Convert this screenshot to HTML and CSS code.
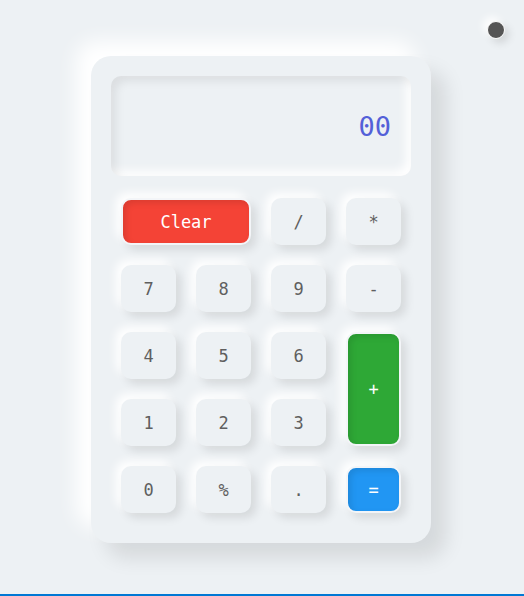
FILE: index.html
```html
<!DOCTYPE html>
<html>
<head>
<meta charset="utf-8">
<link rel="stylesheet" href="styles.css">
</head>
<body>
<div class="page">
  <button class="toggle" aria-label="theme"></button>
  <div class="calc">
    <div class="display">00</div>
    <div class="keys">
      <button class="key clear">Clear</button>
      <button class="key">/</button>
      <button class="key">*</button>
      <button class="key">7</button>
      <button class="key">8</button>
      <button class="key">9</button>
      <button class="key">-</button>
      <button class="key">4</button>
      <button class="key">5</button>
      <button class="key">6</button>
      <button class="key plus">+</button>
      <button class="key">1</button>
      <button class="key">2</button>
      <button class="key">3</button>
      <button class="key">0</button>
      <button class="key">%</button>
      <button class="key">.</button>
      <button class="key equals">=</button>
    </div>
  </div>
</div>
</body>
</html>
```
FILE: styles.css
```css
html, body {
  margin: 0;
  padding: 0;
  background: #edf1f4;
}
.page {
  position: relative;
  border-bottom: 2px solid #0078d4;
  padding: 56px 0 0 91px;
  height: 538px;
}
.toggle {
  position: absolute;
  left: 487px;
  top: 21px;
  width: 18px;
  height: 18px;
  border-radius: 50%;
  background: #555;
  border: 1px solid #fff;
  padding: 0;
  box-shadow: -4px -4px 8px #fff, 4px 4px 8px rgba(0,0,0,0.12);
}
.calc {
  width: 300px;
  padding: 20px;
  border-radius: 20px;
  background: #edf1f4;
  box-shadow: 15px 15px 20px rgba(0,0,0,0.1), -15px -15px 20px #fff;
}
.display {
  height: 100px;
  border-radius: 10px;
  box-shadow: inset 5px 5px 10px rgba(0,0,0,0.08), inset -5px -5px 10px #fff;
  display: flex;
  align-items: center;
  justify-content: flex-end;
  padding-right: 20px;
  font-family: "DejaVu Sans Mono", monospace;
  font-size: 27px;
  color: #5360d8;
}
.keys {
  margin-top: 22px;
  padding: 0 10px 10px;
  display: grid;
  grid-template-columns: repeat(4, 55px);
  grid-auto-rows: 47px;
  gap: 20px;
}
.key {
  border: none;
  border-radius: 10px;
  background: #edf1f4;
  box-shadow: 5px 5px 10px rgba(0,0,0,0.1), -5px -5px 10px #fff;
  font-family: "DejaVu Sans Mono", monospace;
  font-size: 17px;
  color: #5f5f5f;
  padding: 0;
}
.clear, .plus, .equals {
  border: 2px solid #f3f5f8;
  color: #fff;
  box-shadow: inset 3px 3px 6px rgba(0,0,0,0.1), 5px 5px 10px rgba(0,0,0,0.1), -5px -5px 10px #fff;
}
.clear {
  grid-column: span 2;
  background: #f44336;
}
.plus {
  grid-row: span 2;
  background: #2ea836;
}
.equals {
  background: #2196f3;
}
```
